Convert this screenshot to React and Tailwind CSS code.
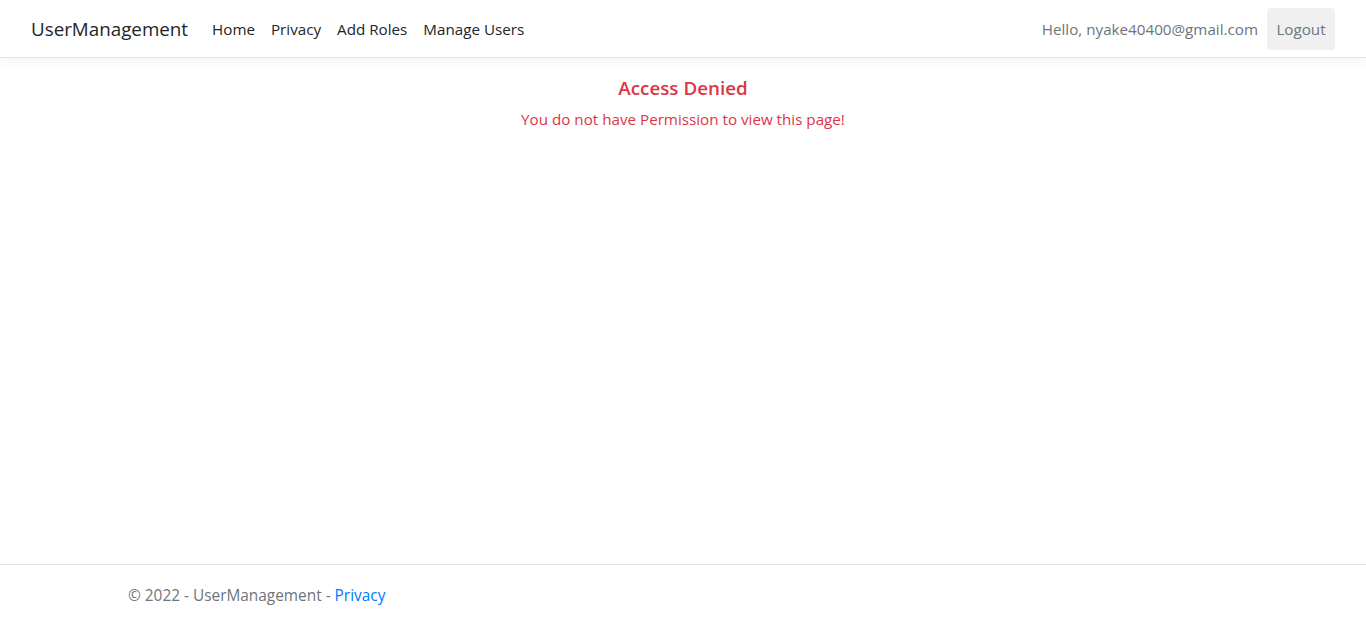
export default function App() {
  return (
    <div
      className="min-h-screen flex flex-col bg-white text-[#212529]"
      style={{ fontFamily: '"Open Sans", "Noto Sans", sans-serif' }}
    >
      <header>
        <nav className="h-[58px] flex items-center px-[31px] pt-[1px] bg-white border-b border-[#e5e5e5] shadow-[0_0.25rem_0.75rem_rgba(0,0,0,0.05)] mb-4">
          <span className="text-[18.8px] leading-[30px] text-[#212529] mr-4">UserManagement</span>
          <ul className="flex items-center text-[15.2px] leading-6 text-[#212529] flex-1">
            <li className="px-2 py-2">Home</li>
            <li className="px-2 py-2">Privacy</li>
            <li className="px-2 py-2">Add Roles</li>
            <li className="px-2 py-2">Manage Users</li>
          </ul>
          <div className="flex items-center text-[15.2px] leading-6 text-[#6c757d]">
            <span className="pl-2 pr-[9px] py-2">Hello, nyake40400@gmail.com</span>
            <span className="h-[42px] w-[68px] -mt-[1px] flex items-center justify-center pt-[1px] rounded bg-[#f0f0f0]">Logout</span>
          </div>
        </nav>
      </header>
      <main className="flex-1 flex flex-col items-center text-[#dc3545]">
        <h1 className="text-[18.8px] leading-6 font-semibold mt-[2px]">Access Denied</h1>
        <p className="text-[15.2px] leading-6 mt-[7px]">You do not have Permission to view this page!</p>
      </main>
      <footer className="border-t border-[#dee2e6] h-[61px] flex items-center pt-[2px]">
        <div className="w-[1140px] mx-auto px-[15px] text-[15.4px] text-[#6c757d]">
          © 2022 - UserManagement - <span className="text-[#007bff]">Privacy</span>
        </div>
      </footer>
    </div>
  );
}
